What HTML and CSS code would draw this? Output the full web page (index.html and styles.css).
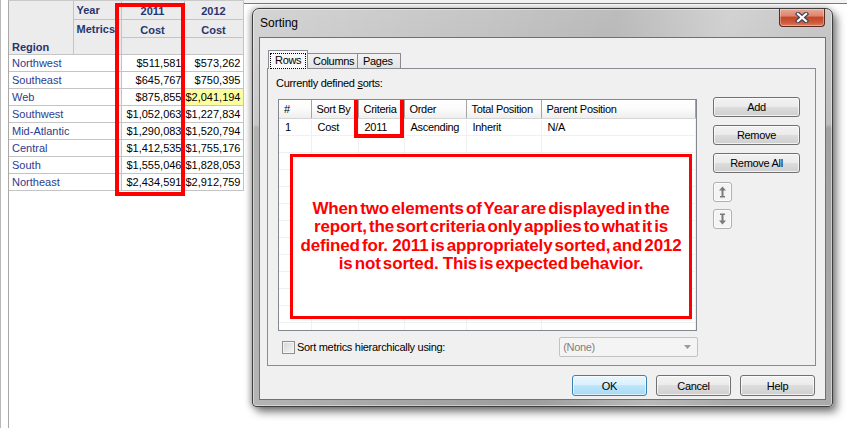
FILE: index.html
```html
<!DOCTYPE html>
<html lang="en">
<head>
  <meta charset="UTF-8" />
  <title>Sorting</title>
  <link rel="stylesheet" href="styles.css">
</head>
<body>
  <div class="desk">

    <!-- REPORT GRID (behind the dialog) -->
    <div class="report">
      <table class="grid">
        <colgroup>
          <col class="c-region"><col class="c-attr"><col class="c-2011"><col class="c-2012">
        </colgroup>
        <tr class="h1">
          <th rowspan="3" class="corner">Region</th>
          <th class="attr">Year</th>
          <th class="elem">2011</th>
          <th class="elem">2012</th>
        </tr>
        <tr class="h2">
          <th rowspan="2" class="attr metrics">Metrics</th>
          <th class="elem">Cost</th>
          <th class="elem">Cost</th>
        </tr>
        <tr class="h3">
          <th class="elem"></th>
          <th class="elem"></th>
        </tr>
        <tr><td colspan="2" class="name">Northwest</td><td class="num">$511,581</td><td class="num">$573,262</td></tr>
        <tr><td colspan="2" class="name">Southeast</td><td class="num">$645,767</td><td class="num">$750,395</td></tr>
        <tr><td colspan="2" class="name">Web</td><td class="num">$875,855</td><td class="num hilite">$2,041,194</td></tr>
        <tr><td colspan="2" class="name">Southwest</td><td class="num">$1,052,063</td><td class="num">$1,227,834</td></tr>
        <tr><td colspan="2" class="name">Mid-Atlantic</td><td class="num">$1,290,083</td><td class="num">$1,520,794</td></tr>
        <tr><td colspan="2" class="name">Central</td><td class="num">$1,412,535</td><td class="num">$1,755,176</td></tr>
        <tr><td colspan="2" class="name">South</td><td class="num">$1,555,046</td><td class="num">$1,828,053</td></tr>
        <tr><td colspan="2" class="name">Northeast</td><td class="num">$2,434,591</td><td class="num">$2,912,759</td></tr>
      </table>
      <div class="mark mark-col"></div>
    </div>

    <div class="pane-top"></div>

    <!-- SORTING DIALOG -->
    <div class="window">
      <div class="titlebar">
        <span class="title">Sorting</span>
        <button class="close-btn" title="Close">
          <svg width="14" height="11" viewBox="0 0 14 11">
            <path d="M3 2 L11 9 M11 2 L3 9" stroke="#3d4555" stroke-width="4.4" stroke-linecap="square"/>
            <path d="M3 2 L11 9 M11 2 L3 9" stroke="#ffffff" stroke-width="2.2" stroke-linecap="square"/>
          </svg>
        </button>
      </div>

      <div class="client">
        <div class="tabstrip">
          <div class="tab active"><span class="focus">Rows</span></div>
          <div class="tab">Columns</div>
          <div class="tab">Pages</div>
        </div>

        <div class="tab-page">
          <div class="label">Currently defined <u>s</u>orts:</div>

          <div class="sort-row">
            <div class="listview">
              <table class="sorts">
                <colgroup>
                  <col class="s-num"><col class="s-by"><col class="s-crit"><col class="s-order"><col class="s-total"><col>
                </colgroup>
                <tr class="lv-head">
                  <th>#</th><th>Sort By</th><th>Criteria</th><th>Order</th><th>Total Position</th><th>Parent Position</th>
                </tr>
                <tr><td>1</td><td>Cost</td><td>2011</td><td>Ascending</td><td>Inherit</td><td>N/A</td></tr>
                <tr><td></td><td></td><td></td><td></td><td></td><td></td></tr>
                <tr><td></td><td></td><td></td><td></td><td></td><td></td></tr>
                <tr><td></td><td></td><td></td><td></td><td></td><td></td></tr>
                <tr><td></td><td></td><td></td><td></td><td></td><td></td></tr>
                <tr><td></td><td></td><td></td><td></td><td></td><td></td></tr>
                <tr><td></td><td></td><td></td><td></td><td></td><td></td></tr>
                <tr><td></td><td></td><td></td><td></td><td></td><td></td></tr>
                <tr><td></td><td></td><td></td><td></td><td></td><td></td></tr>
                <tr><td></td><td></td><td></td><td></td><td></td><td></td></tr>
                <tr><td></td><td></td><td></td><td></td><td></td><td></td></tr>
                <tr><td></td><td></td><td></td><td></td><td></td><td></td></tr>
                <tr><td></td><td></td><td></td><td></td><td></td><td></td></tr>
              </table>
              <div class="mark mark-crit"></div>
              <div class="note">
                When two elements of Year are displayed in the<br>
                report, the sort criteria only applies to what it is<br>
                defined for.&nbsp; 2011 is appropriately sorted, and 2012<br>
                is not sorted.&nbsp; This is expected behavior.
              </div>
            </div>

            <div class="side-buttons">
              <button class="btn">Add</button>
              <button class="btn">Remove</button>
              <button class="btn">Remove All</button>
              <button class="btn arrow up" disabled>
                <svg width="9" height="12" viewBox="0 0 9 12">
                  <path d="M4.5 0.5 L8 4.5 L5.5 4.5 L5.5 10 L7 10 L7 11.5 L2 11.5 L2 10 L3.5 10 L3.5 4.5 L1 4.5 Z" fill="#7a7a7a"/>
                </svg>
              </button>
              <button class="btn arrow down" disabled>
                <svg width="9" height="12" viewBox="0 0 9 12">
                  <path d="M4.5 11.5 L8 7.5 L5.5 7.5 L5.5 2 L7 2 L7 0.5 L2 0.5 L2 2 L3.5 2 L3.5 7.5 L1 7.5 Z" fill="#7a7a7a"/>
                </svg>
              </button>
            </div>
          </div>

          <div class="check-row">
            <span class="checkbox"></span>
            <span class="check-label">Sort metrics hierarchically using:</span>
            <div class="combo">
              <span>(None)</span>
              <svg width="7" height="4" viewBox="0 0 7 4"><path d="M0 0 L7 0 L3.5 4 Z" fill="#9a9a9a"/></svg>
            </div>
          </div>
        </div>

        <div class="dialog-buttons">
          <button class="btn default">OK</button>
          <button class="btn">Cancel</button>
          <button class="btn">Help</button>
        </div>
      </div>
    </div>

  </div>
</body>
</html>
```

FILE: styles.css
```css
:root {
  --ui-font: "Liberation Sans", Arial, sans-serif;
  --grid-line: #c4c4c4;
  --header-bg: #ececec;
  --header-text: #27356f;
  --name-text: #2b3c8f;
  --mark-red: #ff0000;
}
* {
  box-sizing: border-box;
}
body {
  margin: 0;
  background: #ffffff;
  font-family: var(--ui-font);
}
.desk {
  position: relative;
  width: 847px;
  height: 428px;
  overflow: hidden;
  border-left: 1px solid #b8b8b8;
}

/* Report grid */
.report {
  position: relative;
  margin-left: 7px;
  height: 428px;
  border-left: 1px solid #a9a9a9;
  border-top: 1px solid #c8c8c8;
}
.grid {
  border-collapse: collapse;
  table-layout: fixed;
  width: 234px;
  font-size: 11px;
}
.c-region { width: 64px; }
.c-attr { width: 48px; }
.c-2011 { width: 63px; }
.c-2012 { width: 59px; }
.grid th,
.grid td {
  border: 1px solid var(--grid-line);
  padding: 0 3px;
  white-space: nowrap;
  overflow: hidden;
}
.grid tr:first-child th { border-top: none; }
.grid .corner { border-left: none; }
.grid .name { border-left: none; }
.grid th {
  background: var(--header-bg);
  color: var(--header-text);
  font-weight: bold;
  text-align: left;
}
.grid .h1 th,
.grid .h2 th {
  height: 18px;
  padding-top: 3px;
}
.grid .h3 th { height: 17px; }
.grid .corner {
  vertical-align: bottom;
  padding-bottom: 1px;
}
.grid .attr { vertical-align: top; }
.grid .elem { text-align: center; }
.grid td { height: 17px; }
.grid .name { color: var(--name-text); }
.grid .num {
  text-align: right;
  color: #000;
  padding: 0 2px 0 0;
}
.grid .hilite { background: #fcfca0; }

.mark {
  position: absolute;
  border: 4px solid var(--mark-red);
}
.mark-col {
  left: 106px;
  top: 2px;
  width: 70px;
  height: 193px;
}

/* strip of the host window above the dialog */
.pane-top {
  position: absolute;
  left: 243px;
  right: 0;
  top: 0;
  height: 4px;
  background: #f3f3f3;
  border-bottom: 1px solid #7a7a7a;
}

/* Dialog window */
.window {
  position: absolute;
  left: 251px;
  top: 8px;
  width: 581px;
  height: 399px;
  display: flex;
  flex-direction: column;
  padding: 0 6px 6px;
  border: 1px solid #3f3f3f;
  border-radius: 7px 7px 4px 4px;
  background:
    linear-gradient(102deg, rgba(255,255,255,0.25) 0, rgba(255,255,255,0) 35%, rgba(0,0,0,0.05) 55%, rgba(255,255,255,0.22) 72%, rgba(255,255,255,0.05) 85%),
    linear-gradient(#c6c6c6 0, #b9b9b9 29%, #9c9c9c 30%, #a6a6a6 100%);
  box-shadow: 4px 5px 9px rgba(0, 0, 0, 0.5), -2px 0 6px rgba(0, 0, 0, 0.3), inset 0 0 0 1px rgba(255,255,255,0.45);
}
.titlebar {
  height: 28px;
  display: flex;
  justify-content: space-between;
  align-items: flex-start;
  flex-shrink: 0;
}
.title {
  margin: 7px 0 0 1px;
  font-size: 12px;
  color: #000;
}
.close-btn {
  width: 46px;
  height: 18px;
  margin-right: 1px;
  padding: 0;
  border: 1px solid #5a2a1e;
  border-top: none;
  border-radius: 0 0 4px 4px;
  background: linear-gradient(#e9a896 0, #dc8670 40%, #c64628 50%, #cf5a3c 80%, #dc7e62 100%);
  box-shadow: inset 0 0 0 1px rgba(255,255,255,0.35);
  display: flex;
  align-items: center;
  justify-content: center;
}

.client {
  flex: 1;
  background: #f0f0f0;
  border: 1px solid #707070;
  display: flex;
  flex-direction: column;
  padding: 12px 9px 0 7px;
  font-size: 11px;
  letter-spacing: -0.3px;
}

/* Tabs */
.tabstrip {
  display: flex;
  align-items: flex-end;
  height: 18px;
  padding-left: 1px;
  position: relative;
  z-index: 1;
}
.tab {
  height: 15px;
  padding: 1px 5px 0;
  border: 1px solid #898c95;
  border-bottom: none;
  border-left: none;
  background: linear-gradient(#f3f3f3, #e3e3e3);
  line-height: 13px;
}
.tab.active {
  height: 19px;
  margin-bottom: -1px;
  padding: 2px 5px 0;
  background: #f9f9f9;
  border-left: 1px solid #898c95;
}
.tab:nth-child(2) { width: 50px; }
.tab:nth-child(3) { width: 43px; }
.tab.active { width: 40px; padding-left: 1px; }
.focus {
  display: inline-block;
  padding: 0 4px 1px;
  border: 1px dotted #000;
}
.tab-page {
  height: 298px;
  border: 1px solid #898c95;
  background: #f0f0f0;
  padding: 8px 0 0 8px;
  display: flex;
  flex-direction: column;
}
.label {
  line-height: 13px;
}
.sort-row {
  display: flex;
  margin-top: 9px;
  margin-left: 2px;
}

/* List of sorts */
.listview {
  position: relative;
  width: 419px;
  height: 232px;
  border: 1px solid #828790;
  background: #fff;
  overflow: hidden;
}
.sorts {
  border-collapse: collapse;
  table-layout: fixed;
  width: 417px;
}
.s-num { width: 32px; }
.s-by { width: 47px; }
.s-crit { width: 46px; }
.s-order { width: 62px; }
.s-total { width: 75px; }
.sorts th,
.sorts td {
  height: 17px;
  padding: 0 0 0 6px;
  text-align: left;
  font-weight: normal;
  white-space: nowrap;
  border-right: 1px solid #f0f0f0;
  border-bottom: 1px solid #f0f0f0;
}
.sorts .lv-head th {
  height: 18px;
  background: linear-gradient(#ffffff 0, #fbfbfb 50%, #eeeeee 100%);
  border-right: 1px solid #a5a5a5;
  border-bottom: 1px solid #d5d5d5;
  padding-left: 5px;
}
.mark-crit {
  left: 75px;
  top: -7px;
  width: 50px;
  height: 45px;
}
.note {
  position: absolute;
  left: 11px;
  top: 54px;
  width: 402px;
  height: 165px;
  border: 3px solid var(--mark-red);
  background: #fff;
  color: var(--mark-red);
  font-size: 17px;
  font-weight: bold;
  line-height: 18.3px;
  letter-spacing: -0.15px;
  word-spacing: -2.4px;
  text-align: center;
  display: flex;
  align-items: center;
  justify-content: center;
}

/* Buttons */
.btn {
  font-family: var(--ui-font);
  font-size: 11px;
  letter-spacing: -0.3px;
  color: #000;
  padding: 0;
  border: 1px solid #707070;
  border-radius: 3px;
  background: linear-gradient(#f2f2f2 0, #ebebeb 49%, #dddddd 50%, #cfcfcf 100%);
  box-shadow: inset 0 0 0 1px rgba(255,255,255,0.7);
}
.btn.default {
  border-color: #3c7fb1;
  background: linear-gradient(#eaf6fd 0, #d9f0fc 49%, #bee6fd 50%, #a7d9f5 100%);
  box-shadow: inset 0 0 0 1px rgba(255,255,255,0.6);
}
.side-buttons {
  display: flex;
  flex-direction: column;
  align-items: flex-start;
  margin: -2px 0 0 16px;
}
.side-buttons .btn {
  width: 87px;
  height: 20px;
  margin-bottom: 8px;
}
.side-buttons .arrow {
  width: 19px;
  height: 20px;
  margin: 1px 0 6px;
  border-color: #b0b0b0;
  background: #f4f4f4;
  display: flex;
  align-items: center;
  justify-content: center;
}

.check-row {
  display: flex;
  align-items: center;
  height: 20px;
  margin-top: 6px;
  padding-left: 6px;
}
.checkbox {
  width: 13px;
  height: 13px;
  border: 1px solid #8f8f8f;
  background: linear-gradient(135deg, #d6d6d6, #f6f6f6);
  box-shadow: inset 0 0 0 1px #f4f4f4;
}
.check-label {
  margin-left: 2px;
}
.combo {
  margin-left: 114px;
  width: 139px;
  height: 20px;
  border: 1px solid #c2c2c2;
  border-radius: 2px;
  background: #f4f4f4;
  color: #808080;
  display: flex;
  align-items: center;
  justify-content: space-between;
  padding: 0 6px 0 3px;
}

.dialog-buttons {
  display: flex;
  justify-content: flex-end;
  gap: 9px;
  margin-top: 9px;
  padding-right: 1px;
}
.dialog-buttons .btn {
  width: 75px;
  height: 21px;
}
```
